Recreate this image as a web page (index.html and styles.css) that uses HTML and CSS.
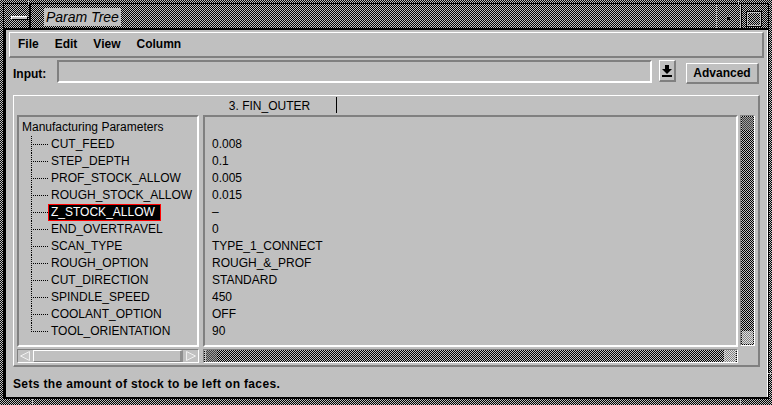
FILE: index.html
```html
<!DOCTYPE html>
<html>
<head>
<meta charset="utf-8">
<title>Param Tree</title>
<link rel="stylesheet" href="styles.css">
</head>
<body>
<div class="window">
  <div class="frame">
    <div class="titlebar">
      <div class="tb-menu"><span class="tb-bar"></span></div>
      <div class="tb-title"><span class="tb-text">Param Tree</span></div>
      <div class="tb-min"><span class="tb-dot"></span></div>
      <div class="tb-max"><span class="tb-square"></span></div>
    </div>
    <div class="client">
      <div class="menubar">
        <span class="menu-item">File</span>
        <span class="menu-item">Edit</span>
        <span class="menu-item">View</span>
        <span class="menu-item">Column</span>
      </div>
      <div class="input-row">
        <span class="input-label">Input:</span>
        <div class="input-field"></div>
        <div class="arrow-btn">
          <svg width="10" height="12" viewBox="0 0 10 12"><rect x="3" y="0" width="4" height="4" fill="#000"/><polygon points="0,4 10,4 5,9" fill="#000"/><rect x="0" y="10" width="10" height="2" fill="#000"/></svg>
        </div>
        <div class="adv-btn">Advanced</div>
      </div>
      <div class="tree-panel">
        <div class="tree-header"><div class="col-head">3. FIN_OUTER</div></div>
        <div class="panes">
          <div class="pane pane-left">
            <div class="row root">Manufacturing Parameters</div>
            <div class="row child"><span class="conn"></span><span class="label">CUT_FEED</span></div>
            <div class="row child"><span class="conn"></span><span class="label">STEP_DEPTH</span></div>
            <div class="row child"><span class="conn"></span><span class="label">PROF_STOCK_ALLOW</span></div>
            <div class="row child"><span class="conn"></span><span class="label">ROUGH_STOCK_ALLOW</span></div>
            <div class="row child"><span class="conn"></span><span class="label sel">Z_STOCK_ALLOW</span></div>
            <div class="row child"><span class="conn"></span><span class="label">END_OVERTRAVEL</span></div>
            <div class="row child"><span class="conn"></span><span class="label">SCAN_TYPE</span></div>
            <div class="row child"><span class="conn"></span><span class="label">ROUGH_OPTION</span></div>
            <div class="row child"><span class="conn"></span><span class="label">CUT_DIRECTION</span></div>
            <div class="row child"><span class="conn"></span><span class="label">SPINDLE_SPEED</span></div>
            <div class="row child"><span class="conn"></span><span class="label">COOLANT_OPTION</span></div>
            <div class="row child last"><span class="conn"></span><span class="label">TOOL_ORIENTATION</span></div>
          </div>
          <div class="pane pane-right">
            <div class="row val"></div>
            <div class="row val">0.008</div>
            <div class="row val">0.1</div>
            <div class="row val">0.005</div>
            <div class="row val">0.015</div>
            <div class="row val">&ndash;</div>
            <div class="row val">0</div>
            <div class="row val">TYPE_1_CONNECT</div>
            <div class="row val">ROUGH_&amp;_PROF</div>
            <div class="row val">STANDARD</div>
            <div class="row val">450</div>
            <div class="row val">OFF</div>
            <div class="row val">90</div>
          </div>
          <div class="vscroll"><span class="sb-end"></span><span class="sb-end sb-end-light"></span></div>
        </div>
        <div class="hscrolls">
          <div class="hscroll hs-left">
            <svg class="sb-arrow" width="12" height="12" viewBox="0 0 12 12"><polygon points="1.5,6 10.5,1.5 10.5,10.5" fill="#c8c8c8" stroke="#f0f0f0" stroke-width="1"/></svg>
            <span class="slider"></span>
            <svg class="sb-arrow" width="12" height="12" viewBox="0 0 12 12"><polygon points="10.5,6 1.5,1.5 1.5,10.5" fill="#c8c8c8" stroke="#f0f0f0" stroke-width="1"/></svg>
          </div>
          <div class="hscroll hs-right"><span class="hs-end"></span><span class="hs-end hs-end-light"></span></div>
        </div>
      </div>
      <div class="status">Sets the amount of stock to be left on faces.</div>
    </div>
  </div>
  <span class="tick tick-t1"></span>
  <span class="tick tick-t2"></span>
  <span class="tick tick-b1"></span>
  <span class="tick tick-b2"></span>
  <span class="tick tick-r1"></span>
</div>
</body>
</html>
```
FILE: styles.css
```css
* {
  box-sizing: border-box;
  margin: 0;
  padding: 0;
}

body {
  margin: 0;
  background: #c0c0c0;
  font-family: "Liberation Sans", Arial, sans-serif;
  font-size: 12px;
  color: #000;
}

.window {
  position: relative;
  width: 772px;
  height: 405px;
  padding: 3px 3px 6px 3px;
  background: repeating-conic-gradient(#000 0 25%, #c0c0c0 0 50%) 0 0 / 2px 2px;
}

.frame {
  height: 100%;
  border: 1px solid #000;
  border-bottom-width: 2px;
  background: #c0c0c0;
  display: flex;
  flex-direction: column;
}

/* ---------- title bar ---------- */
.titlebar {
  height: 26px;
  flex: none;
  display: flex;
  border-bottom: 2px solid #000;
  background: repeating-conic-gradient(#000 0 25%, #c0c0c0 0 50%) 0 0 / 2px 2px;
}

.tb-menu {
  width: 27px;
  border-right: 2px solid #000;
  padding: 12px 0 0 7px;
}

.tb-bar {
  display: block;
  width: 17px;
  height: 4px;
  background: #c0c0c0;
  border-top: 1px solid #fff;
  border-left: 1px solid #fff;
  border-bottom: 1px solid #000;
  border-right: 1px solid #000;
}

.tb-title {
  flex: 1;
  padding: 4px 0 0 13px;
}

.tb-text {
  display: inline-block;
  height: 18px;
  line-height: 18px;
  padding: 0 2px;
  background: #c0c0c0;
  font-style: italic;
  font-size: 14px;
}

.tb-min {
  width: 24px;
  border-left: 1px solid #a8a8a8;
  padding: 12px 0 0 9px;
}

.tb-dot {
  display: block;
  width: 4px;
  height: 4px;
  background: #000;
  border-top: 1px solid #808080;
  border-left: 1px solid #808080;
}

.tb-max {
  width: 28px;
  border-left: 1px solid #c0c0c0;
  box-shadow: inset 1px 0 0 #000;
  padding: 7px 0 0 5px;
}

.tb-square {
  display: block;
  width: 16px;
  height: 16px;
  border: 1px solid #000;
  box-shadow: inset 0 0 0 1px #c0c0c0;
  background: repeating-conic-gradient(#000 0 25%, #c0c0c0 0 50%) 0 0 / 2px 2px;
}

/* ---------- client ---------- */
.client {
  flex: 1;
  display: flex;
  flex-direction: column;
  padding: 0 3px 0 3px;
  border-left: 2px solid #000;
  border-right: 1px solid #fff;
}

.menubar {
  flex: none;
  height: 26px;
  margin-top: 2px;
  display: flex;
  border-top: 1px solid #fff;
  border-left: 1px solid #fff;
  border-bottom: 2px solid #808080;
  border-right: 2px solid #808080;
}

.menu-item {
  padding: 0 8px;
  line-height: 22px;
  font-weight: bold;
}

.input-row {
  flex: none;
  display: flex;
  align-items: flex-start;
  height: 25px;
  margin-top: 2px;
  padding: 0 5px 0 4px;
}

.input-label {
  font-weight: bold;
  line-height: 23px;
  padding-top: 3px;
}

.input-field {
  flex: 1;
  height: 23px;
  margin-left: 11px;
  border-top: 2px solid #808080;
  border-left: 2px solid #808080;
  border-bottom: 2px solid #fff;
  border-right: 2px solid #fff;
}

.arrow-btn {
  width: 17px;
  height: 22px;
  margin-left: 7px;
  display: flex;
  align-items: center;
  justify-content: center;
  border-top: 1px solid #fff;
  border-left: 1px solid #fff;
  border-bottom: 2px solid #808080;
  border-right: 2px solid #808080;
}

.adv-btn {
  width: 73px;
  height: 21px;
  margin-left: 10px;
  margin-top: 3px;
  text-align: center;
  font-weight: bold;
  line-height: 19px;
  border-top: 1px solid #fff;
  border-left: 1px solid #fff;
  border-bottom: 2px solid #808080;
  border-right: 2px solid #808080;
}

/* ---------- tree panel ---------- */
.tree-panel {
  flex: none;
  height: 272px;
  margin: 10px 4px 0 4px;
  display: flex;
  flex-direction: column;
  border-top: 1px solid #fff;
  border-left: 1px solid #fff;
  border-right: 2px solid #808080;
  border-bottom: 2px solid #808080;
}

.tree-header {
  height: 19px;
  flex: none;
  padding-left: 189px;
}

.col-head {
  width: 134px;
  height: 16px;
  margin-top: 1px;
  line-height: 19px;
  text-align: center;
  border-right: 1px solid #000;
}

.panes {
  flex: none;
  height: 232px;
  display: flex;
  padding-left: 3px;
}

.pane {
  height: 232px;
  padding-top: 2px;
  border-top: 2px solid #808080;
  border-left: 2px solid #808080;
  border-bottom: 2px solid #fff;
  border-right: 2px solid #fff;
  overflow: hidden;
}

.pane-left {
  width: 182px;
  margin-right: 4px;
}

.pane-right {
  width: 535px;
  margin-right: 2px;
}

.row {
  height: 17px;
  line-height: 17px;
  white-space: nowrap;
}

.root {
  padding-left: 3px;
}

.child {
  display: flex;
  padding-left: 12px;
}

.conn {
  flex: none;
  width: 17px;
  height: 17px;
  background:
    repeating-linear-gradient(to bottom, #000 0 1px, transparent 1px 2px) 0 0 / 1px 100% no-repeat,
    repeating-linear-gradient(to right, transparent 0 1px, #000 1px 2px) 1px 8px / 16px 1px no-repeat;
}

.child.last .conn {
  background-size: 1px 9px, 16px 1px;
}

.label {
  height: 17px;
  line-height: 15px;
  padding: 0 5px 0 2px;
  border: 1px solid transparent;
}

.label.sel {
  background: #000;
  color: #fff;
  border-color: #ff0000;
}

.val {
  padding-left: 7px;
}

.vscroll {
  width: 15px;
  height: 231px;
  display: flex;
  flex-direction: column;
  justify-content: space-between;
  padding: 1px;
  border-top: 1px solid #808080;
  border-left: 1px solid #808080;
  border-bottom: 1px solid #fff;
  border-right: 1px solid #fff;
  background: repeating-conic-gradient(#000 0 25%, #c0c0c0 0 50%) 0 0 / 2px 2px;
}

.sb-end {
  display: block;
  height: 13px;
  background: repeating-conic-gradient(#404040 0 25%, #a0a0a0 0 50%) 0 0 / 2px 2px;
}

.sb-end-light {
  background: repeating-conic-gradient(#808080 0 25%, #e0e0e0 0 50%) 0 0 / 2px 2px;
}

.hscrolls {
  flex: none;
  display: flex;
  height: 14px;
  margin-top: 2px;
  padding-left: 3px;
}

.hscroll {
  height: 14px;
  display: flex;
  align-items: center;
  padding: 0 1px;
  border-top: 1px solid #808080;
  border-left: 1px solid #808080;
  border-bottom: 1px solid #fff;
  border-right: 1px solid #fff;
}

.hs-left {
  width: 182px;
  background: #c0c0c0;
}

.sb-arrow {
  flex: none;
}

.slider {
  flex: 1;
  height: 12px;
  margin: 0 2px;
  border-top: 1px solid #fff;
  border-left: 1px solid #fff;
  border-bottom: 1px solid #808080;
  border-right: 3px solid #909090;
}

.hs-right {
  width: 535px;
  margin-left: 4px;
  justify-content: space-between;
  background: repeating-conic-gradient(#000 0 25%, #c0c0c0 0 50%) 0 0 / 2px 2px;
}

.hs-end {
  display: block;
  width: 12px;
  height: 12px;
  border-left: 1px solid #c0c0c0;
  background: repeating-conic-gradient(#404040 0 25%, #a0a0a0 0 50%) 0 0 / 2px 2px;
}

.hs-end-light {
  background: repeating-conic-gradient(#808080 0 25%, #e0e0e0 0 50%) 0 0 / 2px 2px;
}

/* ---------- status ---------- */
.status {
  flex: 1;
  padding: 10px 4px 0 4px;
  line-height: 14px;
  font-weight: bold;
  letter-spacing: 0.35px;
}

/* ---------- frame resize ticks ---------- */
.tick {
  position: absolute;
  background: #c0c0c0;
}

.tick-t1 { left: 28px; top: 0; width: 1px; height: 4px; }
.tick-t2 { left: 738px; top: 0; width: 1px; height: 4px; }
.tick-b1 { left: 32px; bottom: 0; width: 1px; height: 6px; }
.tick-b2 { left: 740px; bottom: 0; width: 1px; height: 6px; }
.tick-r1 { right: 0; top: 373px; width: 4px; height: 1px; }
```
